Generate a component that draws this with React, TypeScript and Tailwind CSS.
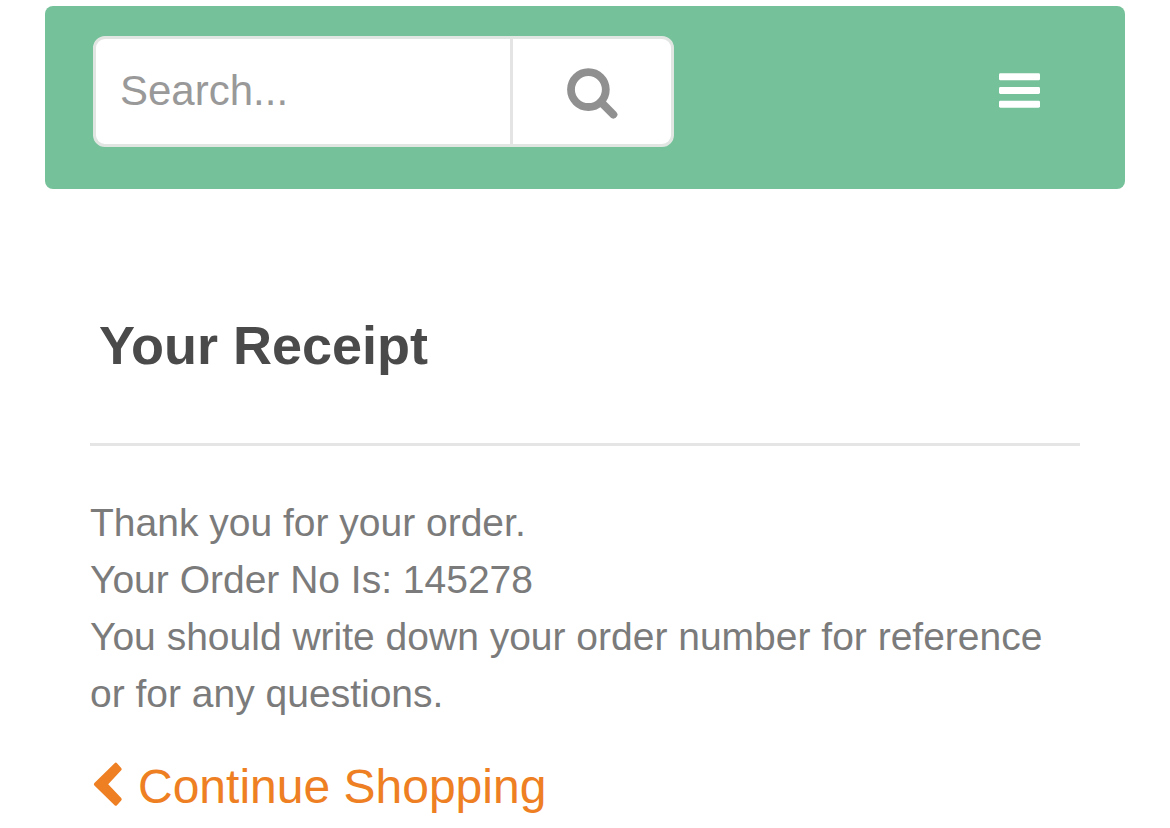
import { useState } from 'react'

const ORDER_NUMBER = '145278'

function SearchIcon() {
  return (
    <svg viewBox="0 0 51 55" className="h-[55px] w-[51px]" fill="none" stroke="currentColor" aria-hidden="true">
      <circle cx="21.4" cy="25.6" r="17.4" strokeWidth="7.8" />
      <path d="M34 38.2 L46.3 50.5" strokeWidth="8" strokeLinecap="round" />
    </svg>
  )
}

function MenuIcon() {
  return (
    <svg viewBox="0 0 41 35" className="h-[35px] w-[41px]" fill="currentColor" aria-hidden="true">
      <rect y="0.3" width="41" height="7" rx="1.4" />
      <rect y="14" width="41" height="7" rx="1.4" />
      <rect y="27.7" width="41" height="7" rx="1.4" />
    </svg>
  )
}

function ChevronLeftIcon() {
  return (
    <svg viewBox="0 0 36 50" className="h-[50px] w-9" fill="currentColor" aria-hidden="true">
      <path d="M24.6 1.2 Q25.8 0 27 1.2 L31.2 5.9 Q32.4 7.1 31.2 8.3 L18.2 22.2 L31.2 36.1 Q32.4 37.3 31.2 38.5 L27 43.2 Q25.8 44.4 24.6 43.2 L4.4 23.4 Q3.2 22.2 4.4 21 Z" />
    </svg>
  )
}

function Header() {
  const [query, setQuery] = useState('')

  return (
    <header className="flex items-start justify-between rounded-lg bg-[#75c19a] px-12 pt-[30px] pb-[42px]">
      <form
        role="search"
        onSubmit={(e) => e.preventDefault()}
        className="flex h-[111px] w-[581px] overflow-hidden rounded-xl border-3 border-[#e2e6e3] bg-white"
      >
        <input
          type="text"
          aria-label="Search"
          placeholder="Search..."
          value={query}
          onChange={(e) => setQuery(e.target.value)}
          className="min-w-0 flex-1 px-6 pb-[2px] text-[42px] text-[#555] outline-none placeholder:text-[#999]"
        />
        <button
          type="submit"
          aria-label="Submit search"
          className="flex w-[161px] items-center justify-center border-l-3 border-[#e4e4e4] text-[#909090]"
        >
          <SearchIcon />
        </button>
      </form>
      <button type="button" aria-label="Menu" className="mt-[37px] mr-[37px] text-white">
        <MenuIcon />
      </button>
    </header>
  )
}

export default function App() {
  return (
    <div className="px-[45px] pt-[6px] font-['Liberation_Sans',Arial,sans-serif]">
      <Header />
      <main className="px-[45px] pt-[120px]">
        <h1 className="border-b-3 border-[#e5e5e5] px-[9px] pb-[62px] text-[54px] leading-[72px] font-bold text-[#4a4a4a]">
          Your Receipt
        </h1>
        <p className="mt-12 text-[39px] leading-[57px] text-[#7b7b7b]">
          Thank you for your order.
          <br />
          Your Order No Is: {ORDER_NUMBER}
          <br />
          You should write down your order number for reference or for any questions.
        </p>
        <a href="#" className="mt-8 flex items-center gap-3 text-[48px] leading-[66px] text-[#ee7f22]">
          <ChevronLeftIcon />
          Continue Shopping
        </a>
      </main>
    </div>
  )
}
